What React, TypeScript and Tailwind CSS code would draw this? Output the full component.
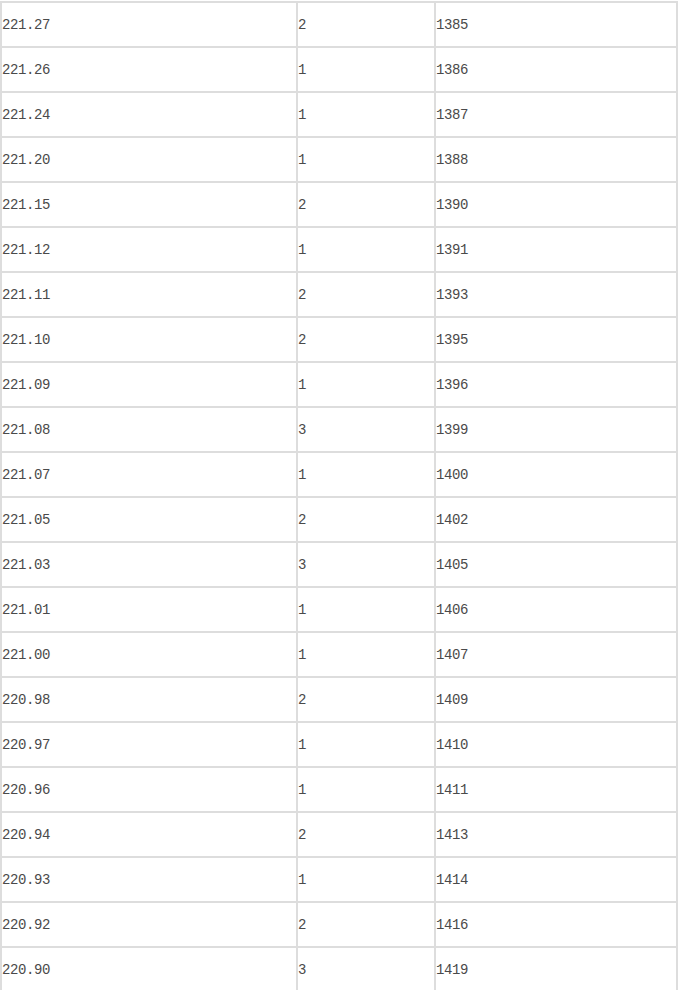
import React from "react";

const rows: [string, string, string][] = [
  ["221.27", "2", "1385"],
  ["221.26", "1", "1386"],
  ["221.24", "1", "1387"],
  ["221.20", "1", "1388"],
  ["221.15", "2", "1390"],
  ["221.12", "1", "1391"],
  ["221.11", "2", "1393"],
  ["221.10", "2", "1395"],
  ["221.09", "1", "1396"],
  ["221.08", "3", "1399"],
  ["221.07", "1", "1400"],
  ["221.05", "2", "1402"],
  ["221.03", "3", "1405"],
  ["221.01", "1", "1406"],
  ["221.00", "1", "1407"],
  ["220.98", "2", "1409"],
  ["220.97", "1", "1410"],
  ["220.96", "1", "1411"],
  ["220.94", "2", "1413"],
  ["220.93", "1", "1414"],
  ["220.92", "2", "1416"],
  ["220.90", "3", "1419"],
];

export default function App() {
  return (
    <div className="w-[678px] h-[990px] overflow-hidden bg-white pt-px">
      <div
        className="grid grid-cols-[294px_136px_240px] gap-[2px] bg-[#dddddd] p-[2px] text-[14px] tracking-[-0.4px] text-[#4a4a4a]"
        style={{ fontFamily: '"Liberation Mono", "Noto Sans CJK SC", monospace' }}
      >
        {rows.map((r, i) => (
          <React.Fragment key={i}>
            {r.map((c, j) => (
              <div key={j} className="h-[43px] bg-white flex items-center pt-[2px]">
                {c}
              </div>
            ))}
          </React.Fragment>
        ))}
      </div>
    </div>
  );
}
